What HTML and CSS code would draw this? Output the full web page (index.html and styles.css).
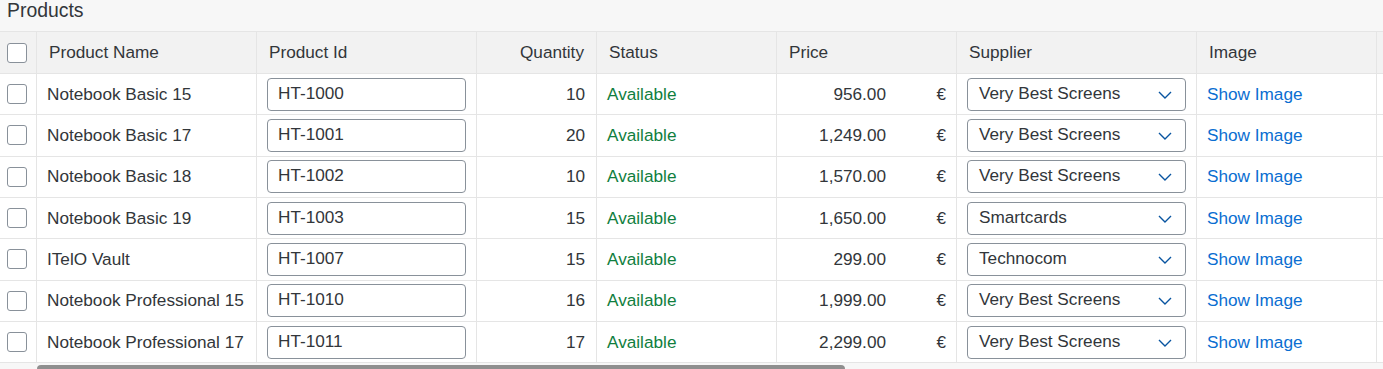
FILE: index.html
```html
<!DOCTYPE html>
<html lang="en">
<head>
<meta charset="utf-8">
<title>Products</title>
<link rel="stylesheet" href="styles.css">
</head>
<body>
<div class="page">
  <div class="title">Products</div>
  <div class="table">
    <div class="row head">
      <div class="cell sel"><span class="cb"></span></div>
      <div class="cell">Product Name</div>
      <div class="cell">Product Id</div>
      <div class="cell right">Quantity</div>
      <div class="cell">Status</div>
      <div class="cell">Price</div>
      <div class="cell">Supplier</div>
      <div class="cell">Image</div>
      <div class="cell fill"></div>
    </div>

    <div class="row">
      <div class="cell sel"><span class="cb"></span></div>
      <div class="cell">Notebook Basic 15</div>
      <div class="cell"><div class="input">HT-1000</div></div>
      <div class="cell right">10</div>
      <div class="cell ok">Available</div>
      <div class="cell price"><span class="amount">956.00</span><span class="cur">€</span></div>
      <div class="cell"><div class="select"><span>Very Best Screens</span><svg class="chev" width="14" height="8" viewBox="0 0 14 8"><path d="M1 1 L7 7 L13 1" fill="none" stroke="currentColor" stroke-width="1.4"/></svg></div></div>
      <div class="cell"><a class="link" href="#">Show Image</a></div>
      <div class="cell fill"></div>
    </div>

    <div class="row">
      <div class="cell sel"><span class="cb"></span></div>
      <div class="cell">Notebook Basic 17</div>
      <div class="cell"><div class="input">HT-1001</div></div>
      <div class="cell right">20</div>
      <div class="cell ok">Available</div>
      <div class="cell price"><span class="amount">1,249.00</span><span class="cur">€</span></div>
      <div class="cell"><div class="select"><span>Very Best Screens</span><svg class="chev" width="14" height="8" viewBox="0 0 14 8"><path d="M1 1 L7 7 L13 1" fill="none" stroke="currentColor" stroke-width="1.4"/></svg></div></div>
      <div class="cell"><a class="link" href="#">Show Image</a></div>
      <div class="cell fill"></div>
    </div>

    <div class="row">
      <div class="cell sel"><span class="cb"></span></div>
      <div class="cell">Notebook Basic 18</div>
      <div class="cell"><div class="input">HT-1002</div></div>
      <div class="cell right">10</div>
      <div class="cell ok">Available</div>
      <div class="cell price"><span class="amount">1,570.00</span><span class="cur">€</span></div>
      <div class="cell"><div class="select"><span>Very Best Screens</span><svg class="chev" width="14" height="8" viewBox="0 0 14 8"><path d="M1 1 L7 7 L13 1" fill="none" stroke="currentColor" stroke-width="1.4"/></svg></div></div>
      <div class="cell"><a class="link" href="#">Show Image</a></div>
      <div class="cell fill"></div>
    </div>

    <div class="row">
      <div class="cell sel"><span class="cb"></span></div>
      <div class="cell">Notebook Basic 19</div>
      <div class="cell"><div class="input">HT-1003</div></div>
      <div class="cell right">15</div>
      <div class="cell ok">Available</div>
      <div class="cell price"><span class="amount">1,650.00</span><span class="cur">€</span></div>
      <div class="cell"><div class="select"><span>Smartcards</span><svg class="chev" width="14" height="8" viewBox="0 0 14 8"><path d="M1 1 L7 7 L13 1" fill="none" stroke="currentColor" stroke-width="1.4"/></svg></div></div>
      <div class="cell"><a class="link" href="#">Show Image</a></div>
      <div class="cell fill"></div>
    </div>

    <div class="row">
      <div class="cell sel"><span class="cb"></span></div>
      <div class="cell">ITelO Vault</div>
      <div class="cell"><div class="input">HT-1007</div></div>
      <div class="cell right">15</div>
      <div class="cell ok">Available</div>
      <div class="cell price"><span class="amount">299.00</span><span class="cur">€</span></div>
      <div class="cell"><div class="select"><span>Technocom</span><svg class="chev" width="14" height="8" viewBox="0 0 14 8"><path d="M1 1 L7 7 L13 1" fill="none" stroke="currentColor" stroke-width="1.4"/></svg></div></div>
      <div class="cell"><a class="link" href="#">Show Image</a></div>
      <div class="cell fill"></div>
    </div>

    <div class="row">
      <div class="cell sel"><span class="cb"></span></div>
      <div class="cell">Notebook Professional 15</div>
      <div class="cell"><div class="input">HT-1010</div></div>
      <div class="cell right">16</div>
      <div class="cell ok">Available</div>
      <div class="cell price"><span class="amount">1,999.00</span><span class="cur">€</span></div>
      <div class="cell"><div class="select"><span>Very Best Screens</span><svg class="chev" width="14" height="8" viewBox="0 0 14 8"><path d="M1 1 L7 7 L13 1" fill="none" stroke="currentColor" stroke-width="1.4"/></svg></div></div>
      <div class="cell"><a class="link" href="#">Show Image</a></div>
      <div class="cell fill"></div>
    </div>

    <div class="row">
      <div class="cell sel"><span class="cb"></span></div>
      <div class="cell">Notebook Professional 17</div>
      <div class="cell"><div class="input">HT-1011</div></div>
      <div class="cell right">17</div>
      <div class="cell ok">Available</div>
      <div class="cell price"><span class="amount">2,299.00</span><span class="cur">€</span></div>
      <div class="cell"><div class="select"><span>Very Best Screens</span><svg class="chev" width="14" height="8" viewBox="0 0 14 8"><path d="M1 1 L7 7 L13 1" fill="none" stroke="currentColor" stroke-width="1.4"/></svg></div></div>
      <div class="cell"><a class="link" href="#">Show Image</a></div>
      <div class="cell fill"></div>
    </div>
  </div>
  <div class="hscroll"><div class="thumb"></div></div>
</div>
</body>
</html>
```

FILE: styles.css
```css
* { box-sizing: border-box; }

html, body {
  margin: 0;
  padding: 0;
}

body {
  background: #f7f7f7;
  font-family: "Liberation Sans", Arial, sans-serif;
  font-size: 17.2px;
  color: #32363a;
  overflow: hidden;
}

.page {
  width: 1383px;
}

.title {
  height: 31px;
  padding-left: 7px;
  font-size: 19.4px;
  line-height: 21px;
  color: #32363a;
}

.table {
  border-top: 1px solid #e5e5e5;
  background: #ffffff;
}

.row {
  display: grid;
  grid-template-columns: 37px 220px 220px 120px 180px 180px 240px 180px 1fr;
  height: 41.33px;
}

.row.head {
  height: 42px;
  background: #f2f2f2;
}

.cell {
  display: flex;
  align-items: center;
  padding: 0 10px;
  border-right: 1px solid #e5e5e5;
  border-bottom: 1px solid #e5e5e5;
  white-space: nowrap;
  overflow: hidden;
}

.head .cell {
  padding: 0 12px;
}

.cell.fill {
  border-right: none;
  padding: 0;
}

.cell.sel,
.head .cell.sel {
  padding: 0 0 0 7px;
}

.cell.right {
  justify-content: flex-end;
  padding-right: 11px;
}

.head .cell.right {
  padding-right: 12px;
}

.cb {
  display: block;
  width: 20px;
  height: 20px;
  border: 1px solid #89919a;
  border-radius: 3px;
  background: #ffffff;
}

.input {
  width: 100%;
  height: 33px;
  border: 1px solid #89919a;
  border-radius: 4px;
  background: #ffffff;
  padding: 0 10px 2px;
  display: flex;
  align-items: center;
}

.ok {
  color: #107e3e;
}

.price .amount {
  flex: 1;
  text-align: right;
}

.price .cur {
  width: 60px;
  text-align: right;
}

.select {
  width: 100%;
  height: 33px;
  border: 1px solid #89919a;
  border-radius: 4px;
  background: #ffffff;
  padding: 0 13px 2px 11px;
  display: flex;
  align-items: center;
  justify-content: space-between;
}

.chev {
  color: #0854a0;
  margin-top: 3px;
}

.link {
  color: #0a6ed1;
  text-decoration: none;
}

.hscroll {
  height: 6px;
  padding: 2px 0 0 37px;
  background: #f7f7f7;
}

.thumb {
  width: 808px;
  height: 8px;
  background: #8f8f8f;
  border-radius: 4px;
}
```
